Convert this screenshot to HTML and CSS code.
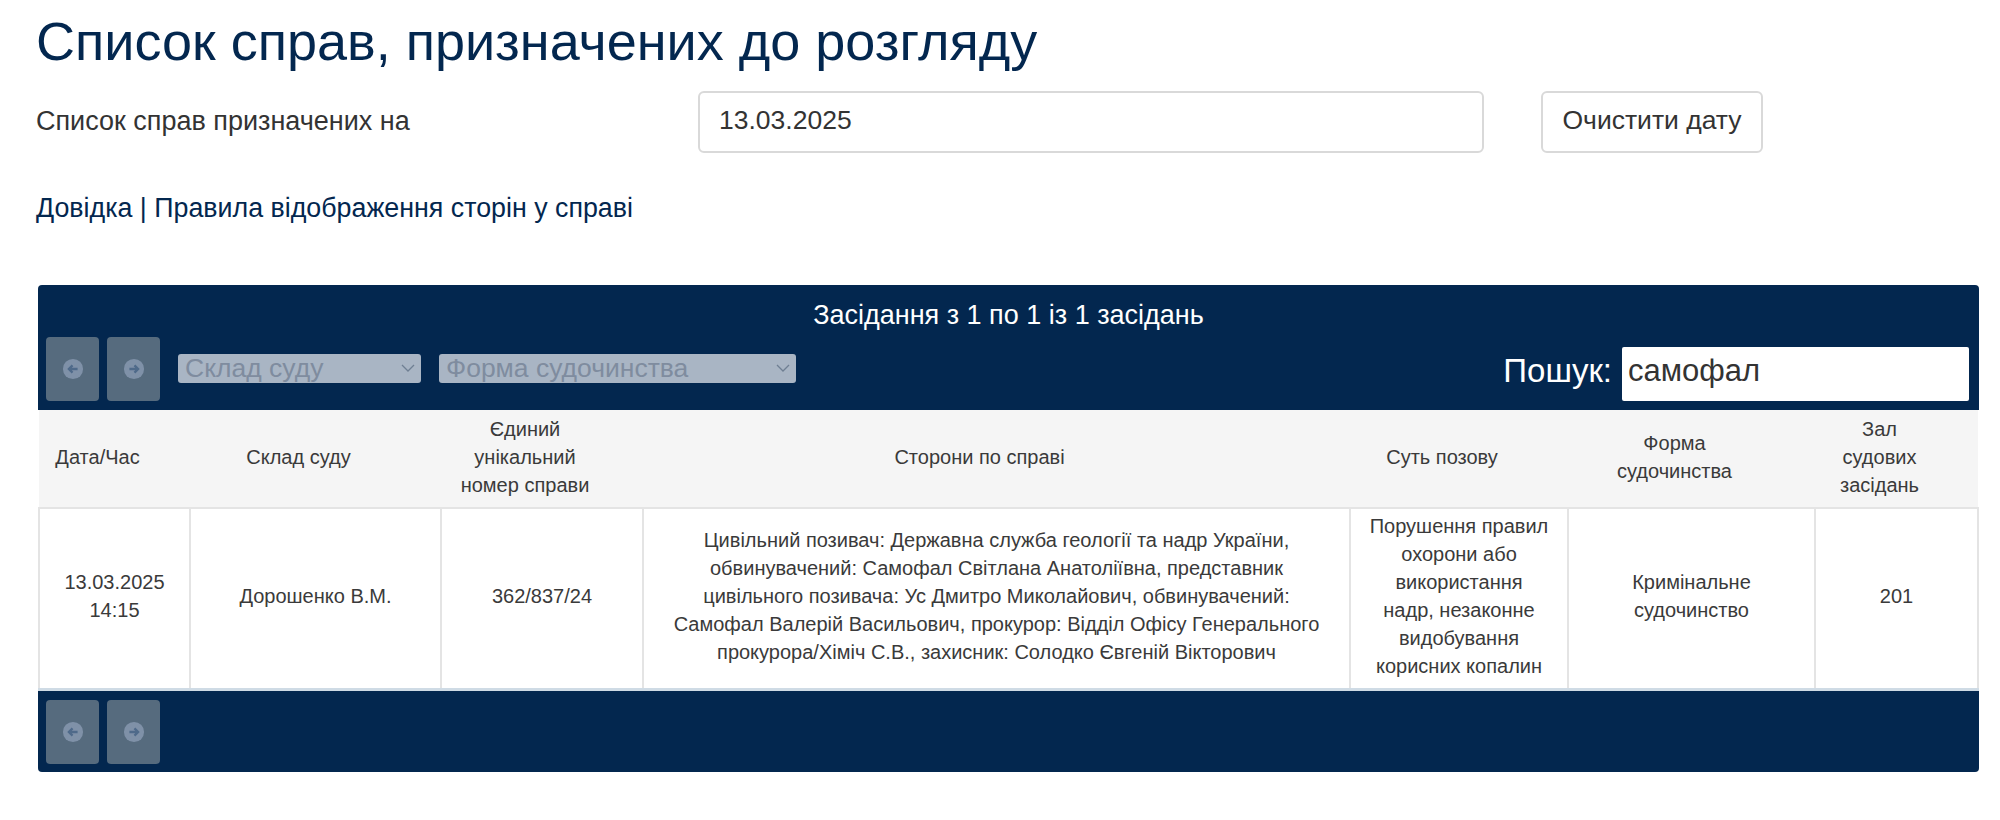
FILE: index.html
```html
<!DOCTYPE html>
<html lang="uk">

<head>
    <meta charset="UTF-8">
    <title>Список справ, призначених до розгляду</title>
    <link rel="stylesheet" href="styles.css">
</head>

<body>
    <h1 class="page-title">Список справ, призначених до розгляду</h1>

    <!-- Вибір дати -->
    <div class="date-row">
        <label class="date-label" for="dateInput">Список справ призначених на</label>
        <input class="date-input" id="dateInput" type="text" value="13.03.2025">
        <button class="date-clear" type="button">Очистити дату</button>
    </div>

    <p class="links"><a href="#">Довідка</a> | <a href="#">Правила відображення сторін у справі</a></p>

    <!-- Таблиця засідань -->
    <div class="panel">
        <div class="panel-top">
            <div class="panel-info">Засідання з 1 по 1 із 1 засідань</div>
            <div class="panel-tools">
                <button class="pager" type="button" disabled>
                    <svg viewBox="0 0 24 24" width="22" height="22"><circle cx="12" cy="12" r="11" fill="#7f91a8" /><path d="M17 12H8M11.500 8L7.500 12l4 4" fill="none" stroke="#4f6a8a" stroke-width="2.500" /></svg>
                </button>
                <button class="pager" type="button" disabled>
                    <svg viewBox="0 0 24 24" width="22" height="22"><circle cx="12" cy="12" r="11" fill="#7f91a8" /><path d="M7 12h9M12.500 8l4 4-4 4" fill="none" stroke="#4f6a8a" stroke-width="2.500" /></svg>
                </button>
                <div class="filter filter-judge">
                    Склад суду
                    <svg class="chevron" viewBox="0 0 14 8" width="14" height="8"><path d="M1 1l6 6 6-6" fill="none" stroke="#6f7f93" stroke-width="1.300" /></svg>
                </div>
                <div class="filter filter-form">
                    Форма судочинства
                    <svg class="chevron" viewBox="0 0 14 8" width="14" height="8"><path d="M1 1l6 6 6-6" fill="none" stroke="#6f7f93" stroke-width="1.300" /></svg>
                </div>
                <label class="search"><span class="search-label">Пошук:</span> <input type="text" value="самофал"></label>
            </div>
        </div>

        <table class="cases">
            <colgroup>
                <col class="c-date">
                <col class="c-judge">
                <col class="c-number">
                <col class="c-sides">
                <col class="c-essence">
                <col class="c-form">
                <col class="c-room">
            </colgroup>
            <thead>
                <tr>
                    <th>Дата/Час</th>
                    <th>Склад суду</th>
                    <th>Єдиний<br>унікальний<br>номер справи</th>
                    <th>Сторони по справі</th>
                    <th>Суть позову</th>
                    <th>Форма<br>судочинства</th>
                    <th>Зал<br>судових<br>засідань</th>
                </tr>
            </thead>
            <tbody>
                <tr>
                    <td>13.03.2025<br>14:15</td>
                    <td>Дорошенко В.М.</td>
                    <td>362/837/24</td>
                    <td>Цивільний позивач: Державна служба геології та надр України,<br>обвинувачений: Самофал Світлана Анатоліївна, представник<br>цивільного позивача: Ус Дмитро Миколайович, обвинувачений:<br>Самофал Валерій Васильович, прокурор: Відділ Офісу Генерального<br>прокурора/Хіміч С.В., захисник: Солодко Євгеній Вікторович</td>
                    <td>Порушення правил<br>охорони або<br>використання<br>надр, незаконне<br>видобування<br>корисних копалин</td>
                    <td>Кримінальне<br>судочинство</td>
                    <td>201</td>
                </tr>
            </tbody>
        </table>

        <div class="panel-bottom">
            <button class="pager" type="button" disabled>
                <svg viewBox="0 0 24 24" width="22" height="22"><circle cx="12" cy="12" r="11" fill="#7f91a8" /><path d="M17 12H8M11.500 8L7.500 12l4 4" fill="none" stroke="#4f6a8a" stroke-width="2.500" /></svg>
            </button>
            <button class="pager" type="button" disabled>
                <svg viewBox="0 0 24 24" width="22" height="22"><circle cx="12" cy="12" r="11" fill="#7f91a8" /><path d="M7 12h9M12.500 8l4 4-4 4" fill="none" stroke="#4f6a8a" stroke-width="2.500" /></svg>
            </button>
        </div>
    </div>
</body>

</html>
```
FILE: styles.css
```css
/* Загальне */
body {
    margin: 0;
    padding: 0 21px 0 36px;
    background: #fff;
    color: #333;
    font-family: "Liberation Sans", Arial, sans-serif;
    font-size: 27px;
    line-height: 34px;
}

a {
    color: #03274f;
    text-decoration: none;
}

.page-title {
    margin: 0;
    height: 91px;
    color: #03274f;
    font-size: 54px;
    font-weight: 400;
    line-height: 82px;
}

/* Рядок дати */
.date-row {
    display: flex;
    align-items: center;
    height: 62px;
}

.date-label {
    width: 662px;
    padding-bottom: 2px;
}

.date-input {
    box-sizing: border-box;
    width: 786px;
    height: 62px;
    padding: 0 19px 4px;
    border: 2px solid #d9d9d9;
    border-radius: 6px;
    color: #333;
    font: inherit;
    font-size: 26.500px;
}

.date-clear {
    box-sizing: border-box;
    width: 222px;
    height: 62px;
    margin-left: 57px;
    padding: 0 0 5px;
    border: 2px solid #d9d9d9;
    border-radius: 6px;
    background: #fff;
    color: #333;
    font: inherit;
    font-size: 26.500px;
}

.links {
    margin: 38px 0 60px;
    color: #03274f;
    font-size: 26.800px;
}

/* Панель таблиці */
.panel {
    margin-left: 2px;
    border-radius: 4px;
    overflow: hidden;
    background: #03274f;
}

.panel-top {
    height: 125px;
    color: #fff;
}

.panel-info {
    height: 51px;
    padding-top: 14px;
    box-sizing: border-box;
    font-size: 27px;
    line-height: 32px;
    text-align: center;
}

.panel-tools {
    display: flex;
    align-items: center;
    padding: 0 10px 0 8px;
}

.pager {
    display: flex;
    align-items: center;
    justify-content: center;
    width: 53px;
    height: 64px;
    margin-right: 8px;
    padding: 0;
    border: 0;
    border-radius: 4px;
    background: #566b7e;
}

/* Неактивні фільтри */
.filter {
    position: relative;
    box-sizing: border-box;
    height: 29px;
    padding-left: 7px;
    border-radius: 3px;
    background: #a9b5c4;
    color: #7f8c9f;
    font-size: 26.500px;
    line-height: 28px;
}

.filter-judge {
    width: 243px;
    margin-right: 18px;
    margin-left: 10px;
}

.filter-form {
    width: 357px;
}

.chevron {
    position: absolute;
    top: 10px;
    right: 6px;
}

.search {
    display: flex;
    align-self: flex-start;
    align-items: center;
    gap: 10px;
    margin: 11px 0 0 auto;
    font-size: 33px;
}

.search-label {
    padding-bottom: 6px;
}

.search input {
    box-sizing: border-box;
    width: 347px;
    height: 54px;
    padding: 0 6px 7px;
    border: 0;
    border-radius: 2px;
    background: #fff;
    color: #333;
    font-family: inherit;
    font-size: 31px;
}

/* Таблиця */
.cases {
    width: 100%;
    border-collapse: collapse;
    table-layout: fixed;
    background: #fff;
    color: #3a3a3a;
    font-size: 20px;
    line-height: 28px;
    text-align: center;
}

.c-date { width: 151px; }
.c-judge { width: 251px; }
.c-number { width: 202px; }
.c-sides { width: 707px; }
.c-essence { width: 218px; }
.c-form { width: 247px; }

.cases th {
    height: 94px;
    padding: 0 34px 3px 0;
    border-bottom: 2px solid #e4e4e4;
    background: #f5f5f5;
    font-weight: 400;
}

.cases td {
    height: 174px;
    padding: 0 0 5px;
    border-left: 2px solid #e4e4e4;
    border-right: 2px solid #e4e4e4;
    border-bottom: 3px solid #cfdbe5;
}

.panel-bottom {
    display: flex;
    align-items: center;
    height: 81px;
    padding-left: 8px;
}
```
